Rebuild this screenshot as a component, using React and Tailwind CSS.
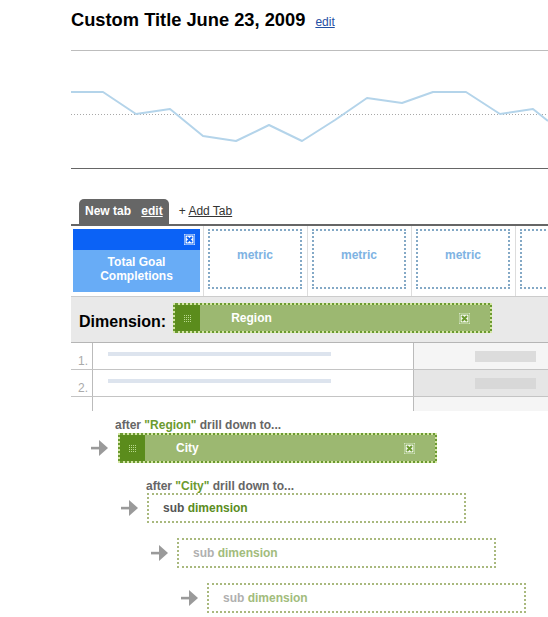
const points = [
  [0, 41], [32, 41], [65, 63], [99, 58], [132, 85], [165, 90], [198, 74], [231, 90],
  [264, 69], [296, 47], [331, 52], [362, 41], [395, 41], [429, 63], [462, 58], [477, 70],
];

const Chart = () => (
  <div className="h-[119px] border-t border-b border-t-[#bdbdbd] border-b-[#666]">
    <svg width="477" height="117" className="block">
      <line x1="0" y1="63.5" x2="477" y2="63.5" stroke="#a8a8a8" strokeWidth="1" strokeDasharray="1 2" />
      <polyline
        points={points.map((p) => p.join(",")).join(" ")}
        fill="none"
        stroke="#b4d4ea"
        strokeWidth="2"
        strokeLinejoin="round"
      />
    </svg>
  </div>
);

const BlueX = () => (
  <svg width="11" height="11" className="block">
    <rect x="0" y="0" width="11" height="11" fill="#ffffff" />
    <rect x="1" y="1" width="9" height="9" fill="none" stroke="#0b62f6" strokeWidth="1" />
    <path d="M3 3 L8 8 M8 3 L3 8" stroke="#0b62f6" strokeWidth="2" />
  </svg>
);

const GreenX = () => (
  <svg width="11" height="11" className="block">
    <rect x="0" y="0" width="11" height="11" fill="#f3f7ec" />
    <rect x="1" y="1" width="9" height="9" fill="none" stroke="#7aa544" strokeWidth="1" />
    <path d="M3 3 L8 8 M8 3 L3 8" stroke="#6b9a30" strokeWidth="2" />
  </svg>
);

const Grip = () => (
  <svg width="7" height="7" className="block">
    {[0, 2, 4, 6].map((y) =>
      [0, 2, 4, 6].map((x) => (
        <rect key={`${x}-${y}`} x={x} y={y} width="1" height="1" fill="#b9d98f" />
      ))
    )}
  </svg>
);

const Arrow = () => (
  <svg width="17" height="16" className="block shrink-0">
    <rect x="0" y="6.8" width="9" height="2.6" fill="#9a9a9a" />
    <polygon points="8,0 17,8 8,16" fill="#9a9a9a" />
  </svg>
);

const Pill = ({ label }) => (
  <div className="w-[319px] h-[30px] shrink-0 border-2 border-dotted border-[#d4e6a4] bg-[#6b9a30] flex">
    <div className="w-[25px] bg-[#5b8c1c] flex items-center justify-center">
      <Grip />
    </div>
    <div className="flex-1 bg-[#9cb871] flex items-center justify-between pl-[31px] pr-[20px]">
      <span className="text-[12px] font-bold text-white leading-[14px]">{label}</span>
      <GreenX />
    </div>
  </div>
);

const SubBox = ({ faded }) => (
  <div className="w-[319px] h-[30px] shrink-0 border-2 border-dotted border-[#a9b97e] flex items-center pl-[14px]">
    <span className="text-[12px] font-bold leading-[14px]">
      <span className={faded ? "text-[#b0b0b0]" : "text-[#555]"}>sub </span>
      <span className={faded ? "text-[#a2bc7c]" : "text-[#5b8c22]"}>dimension</span>
    </span>
  </div>
);

// the last box runs off the right edge, its label is not in view
const MetricBox = ({ label = "metric" }) => (
  <div className="w-[104px] h-full shrink-0 border-r border-[#dddddd] pl-[4px] pt-[3px]">
    <div className="w-[94px] h-[60px] border-2 border-dotted border-[#84a9c6] pt-[17px] text-center text-[12px] font-bold leading-[14px] text-[#7eb3e3]">
      {label}
    </div>
  </div>
);

const TableRow = ({ n, dark }) => (
  <div className="flex h-[27px] border-b border-[#c4c4c4]">
    <div className="w-[22px] shrink-0 border-r border-[#bbb] pl-[7px] pt-[11px] text-[12px] leading-[14px] text-[#aaa]">
      {n}.
    </div>
    <div className="w-[320px] shrink-0 pl-[15px] pt-[9px]">
      <div className="w-[223px] h-[4px] bg-[#dde4ee]" />
    </div>
    <div className={`flex-1 border-l border-[#bbb] pl-[61px] pt-[8px] ${dark ? "bg-[#e6e6e6]" : "bg-[#f5f5f5]"}`}>
      <div className={`w-[61px] h-[11px] ${dark ? "bg-[#d8d8d8]" : "bg-[#dcdcdc]"}`} />
    </div>
  </div>
);

const Label = ({ word, className }) => (
  <div className={`text-[12px] font-bold leading-[13px] text-[#666] ${className}`}>
    after <span className="text-[#6b9a2e]">"{word}"</span> drill down to...
  </div>
);

const App = () => {
  return (
    <div className="w-[548px] h-[617px] overflow-hidden bg-white pl-[71px] font-['Liberation_Sans',Arial,sans-serif]">
      <div className="w-[477px] overflow-hidden">
        <div className="h-[50px] pt-[9px] flex items-baseline">
          <h1 className="text-[18.3px] font-bold leading-[22px] text-black">Custom Title June 23, 2009</h1>
          <a className="ml-[10px] text-[12px] text-[#1f4fa3] underline">edit</a>
        </div>

        <Chart />

        <div className="mt-[30px] flex h-[25px]">
          <div className="ml-[8px] h-[25px] rounded-t-[5px] bg-[#666] px-[6px] text-[12px] font-bold leading-[25px] text-white">
            New tab <span className="ml-[7px] underline">edit</span>
          </div>
          <div className="ml-[10px] text-[12px] leading-[25px] text-[#333]">
            + <span className="underline">Add Tab</span>
          </div>
        </div>
        <div className="h-[2px] bg-[#666]" />

        <div className="flex h-[70px]">
          <div className="w-[133px] h-full shrink-0 border-r border-[#dddddd] pl-[2px] pt-[3px]">
            <div className="w-[127px] h-[63px] flex flex-col">
              <div className="h-[21px] bg-[#0b62f6] flex justify-end pr-[5px] pt-[5px]">
                <BlueX />
              </div>
              <div className="flex-1 bg-[#68acf6] pt-[5px] text-center text-[12px] font-bold leading-[14px] text-white">
                Total Goal
                <br />
                Completions
              </div>
            </div>
          </div>
          <MetricBox />
          <MetricBox />
          <MetricBox />
          <MetricBox label="" />
        </div>

        <div className="h-[47px] border-t border-b border-t-[#cccccc] border-b-[#b5b5b5] bg-[#e9e9e9] flex items-start pl-[8px]">
          <span className="mt-[16px] text-[16px] font-bold leading-[18px] text-black">Dimension:</span>
          <div className="ml-[7px] mt-[6px]">
            <Pill label="Region" />
          </div>
        </div>

        <TableRow n={1} />
        <TableRow n={2} dark />
        <div className="flex h-[14px]">
          <div className="w-[22px] shrink-0 border-r border-[#bbb]" />
          <div className="w-[320px] shrink-0" />
          <div className="flex-1 border-l border-[#bbb] bg-[#f5f5f5]" />
        </div>

        <Label word="Region" className="ml-[44px] mt-[8px]" />
        <div className="mt-[1px] ml-[20px] flex items-center gap-[10px]">
          <Arrow />
          <Pill label="City" />
        </div>

        <Label word="City" className="ml-[75px] mt-[17px]" />
        <div className="ml-[50px] flex items-center gap-[9px]">
          <Arrow />
          <SubBox />
        </div>
        <div className="mt-[15px] ml-[80px] flex items-center gap-[9px]">
          <Arrow />
          <SubBox faded />
        </div>
        <div className="mt-[15px] ml-[110px] flex items-center gap-[9px]">
          <Arrow />
          <SubBox faded />
        </div>
      </div>
    </div>
  );
};

export default App;
